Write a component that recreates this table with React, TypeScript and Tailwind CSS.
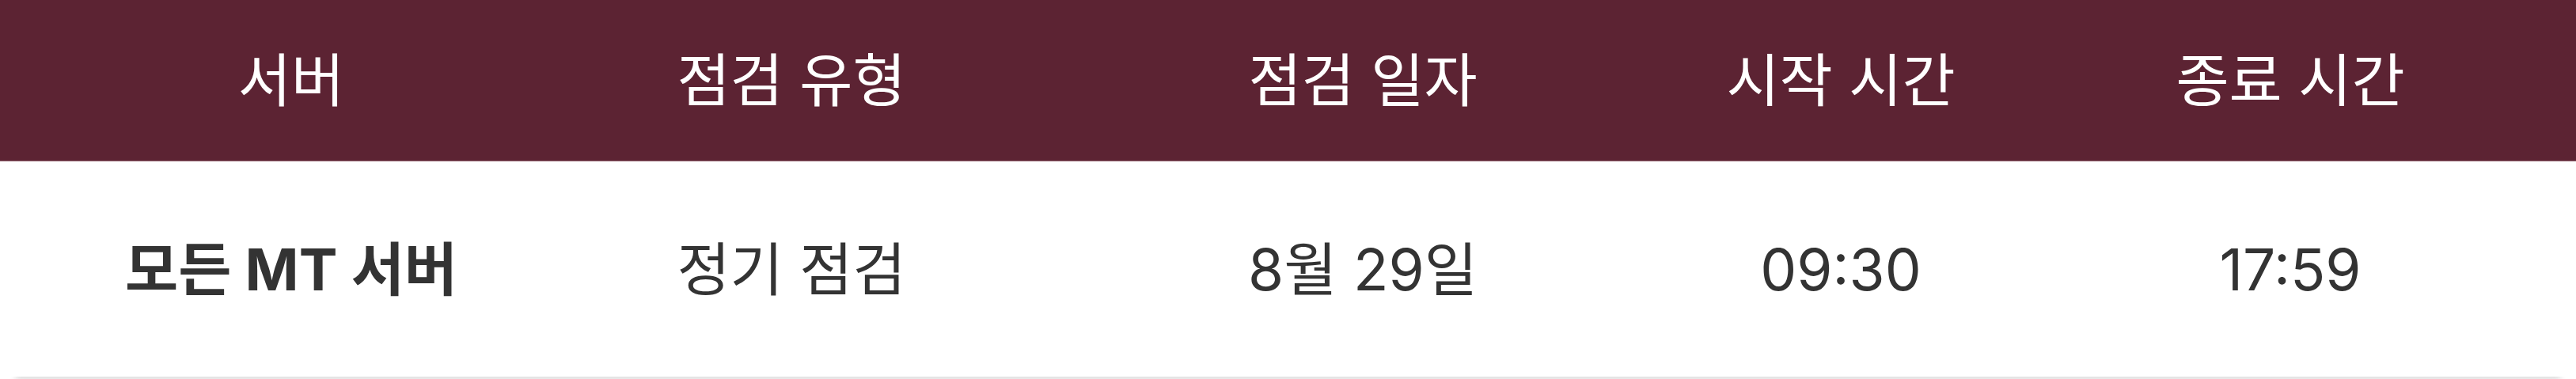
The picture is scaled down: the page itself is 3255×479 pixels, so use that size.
const columns = ["서버", "점검 유형", "점검 일자", "시작 시간", "종료 시간"]

const rows = [["모든 MT 서버", "정기 점검", "8월 29일", "09:30", "17:59"]]

export default function App() {
  return (
    <div className="h-[479px] overflow-hidden bg-white font-['Inter','Noto_Sans_CJK_KR',sans-serif]">
      <div className="mx-[20px] shadow-[0_4px_8px_rgba(0,0,0,0.14)]">
        <div className="-mx-[20px] bg-white">
          {/* header */}
          <div className="grid h-[204px] grid-cols-[614px_650px_794px_414px_722px] items-center border-b border-[#9a6b78] bg-[#5c2333] pl-[61px] text-[73px] leading-none text-white">
            {columns.map((c) => (
              <div key={c} className="text-center">
                {c}
              </div>
            ))}
          </div>

          {/* rows */}
          {rows.map((r, i) => (
            <div
              key={i}
              className="grid h-[272px] grid-cols-[614px_650px_794px_414px_722px] items-center pl-[61px] text-[73px] leading-none text-[#333333]"
            >
              {r.map((v, j) => (
                <div key={j} className={j === 0 ? "text-center font-bold" : "text-center"}>
                  {v}
                </div>
              ))}
            </div>
          ))}
        </div>
      </div>
    </div>
  )
}
